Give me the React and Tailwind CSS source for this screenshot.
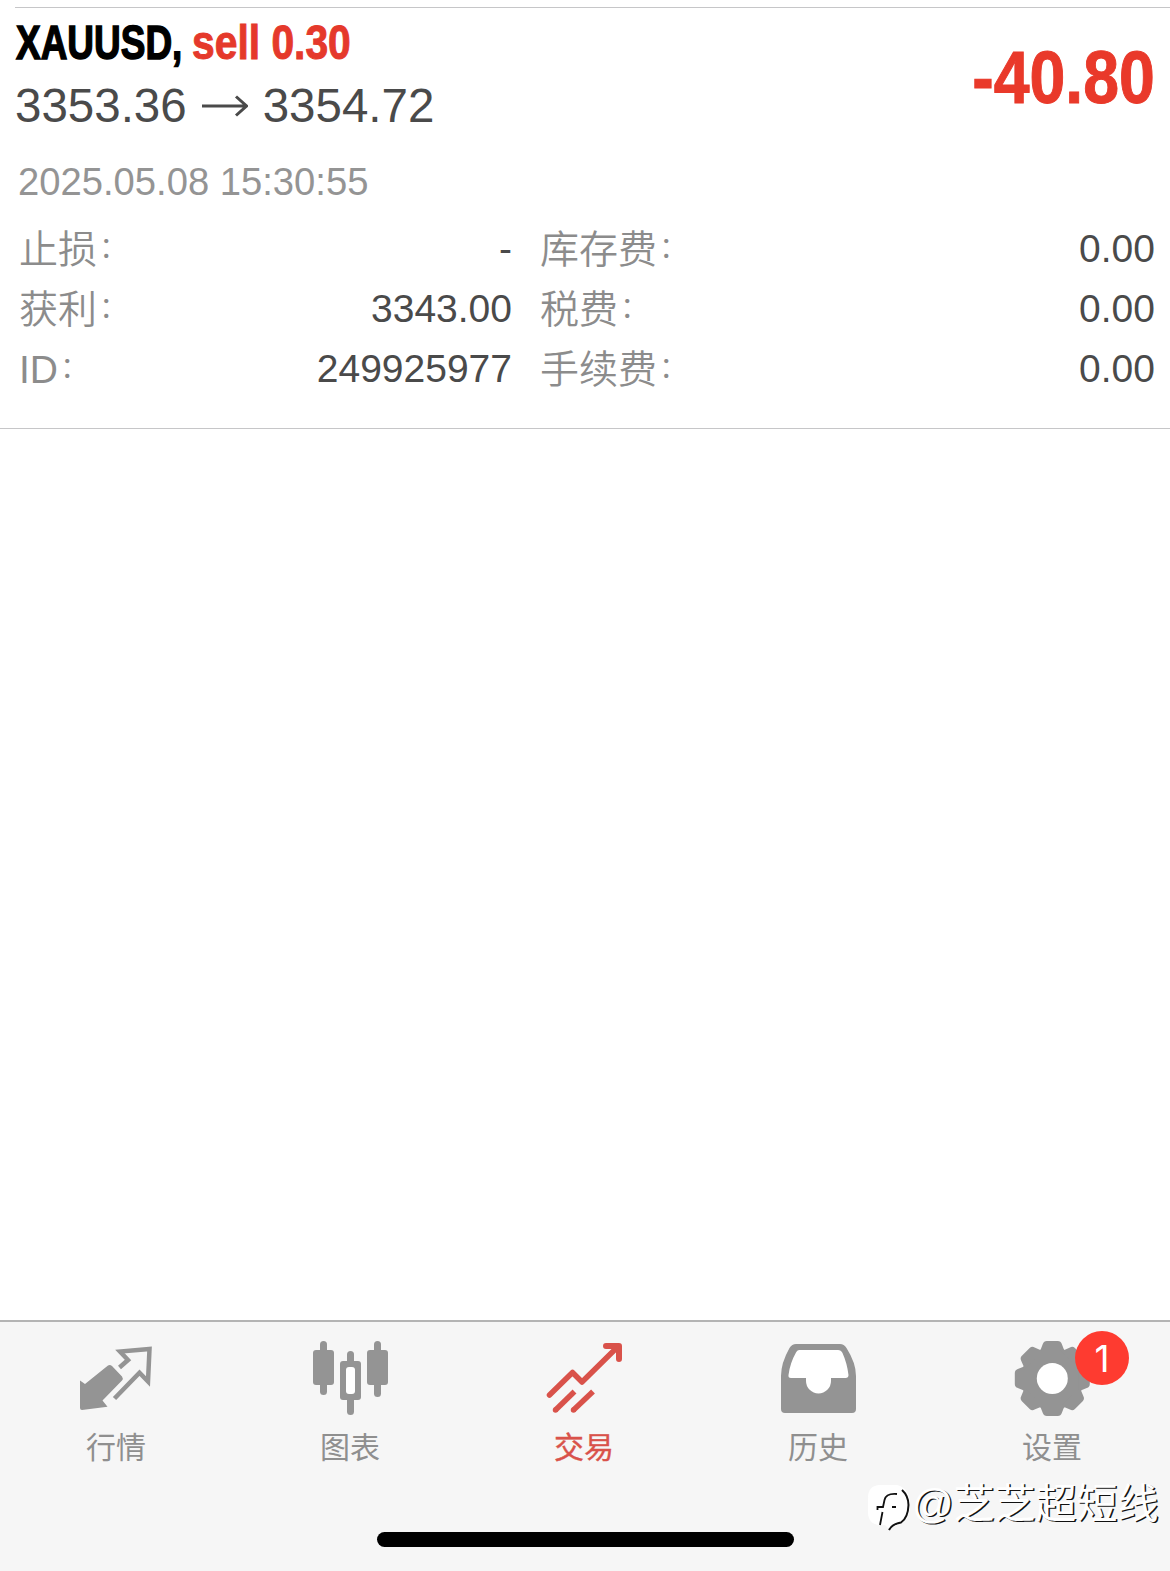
import React from 'react';

const GRAY = '#949494';

const QuotesIcon = () => (
  <svg width="110" height="84" viewBox="0 0 110 84" className="block">
    <path
      d="M18 44.5 L23 48 L46 29.5 Q48 28.300 50 30 L60 40.500 Q61.500 42.500 60 44.500 L40.500 64.500 L45.500 70.700 L20 74 Q18 74 18 72 Z"
      fill={GRAY}
    />
    <path
      d="M57.500 31.500 L66 24 L58 15.500 L87.500 13 L86 45.500 L77.500 36.700 L52.500 62.500"
      fill="none"
      stroke={GRAY}
      strokeWidth="4.5"
      strokeLinejoin="miter"
    />
  </svg>
);

const ChartIcon = () => (
  <svg width="110" height="84" viewBox="0 0 110 84" className="block">
    <g fill={GRAY}>
      <rect x="24" y="5" width="7" height="54" rx="3.5" />
      <rect x="17" y="14" width="21" height="35" rx="3" />
      <rect x="78" y="5" width="7" height="56" rx="3.5" />
      <rect x="71" y="14" width="21" height="35" rx="3" />
      <rect x="51" y="15" width="7" height="64" rx="3.5" />
      <rect x="44" y="25" width="21" height="39" rx="3" />
    </g>
    <rect x="50" y="31" width="9" height="27" rx="3" fill="#ffffff" />
  </svg>
);

const TradeIcon = () => (
  <svg width="110" height="84" viewBox="0 0 110 84" className="block">
    <g fill="none" stroke="#d9524a" strokeWidth="5.5">
      <path d="M19.500 59 L42.500 36.500 L52 46 L88 10.500" strokeLinecap="round" strokeLinejoin="round" />
      <path d="M76 10 H89 V23" strokeWidth="6" strokeLinecap="round" strokeLinejoin="round" />
      <path d="M25.500 74 L44.500 55.500" />
      <path d="M43.500 74 L63 55.500" />
    </g>
    <circle cx="25.500" cy="74" r="2.750" fill="#d9524a" />
    <circle cx="43.500" cy="74" r="2.750" fill="#d9524a" />
  </svg>
);

const HistoryIcon = () => (
  <svg width="110" height="84" viewBox="0 0 110 84" className="block">
    <g transform="translate(1 0)">
      <path
        d="M31 8 H75 Q79 8 81.500 12 Q91 27 91 40 V73 Q91 77 87 77 H20 Q16 77 16 73 V40 Q16 27 24.500 12 Q27 8 31 8 Z"
        fill={GRAY}
      />
      <path
        d="M34 14 H73 Q76 14 77.500 17 Q82 27 83.500 39 Q83.500 42 80.500 42 H66 V45 A12.500 12.500 0 0 1 41 45 V42 H26 Q23 42 23.500 39 Q25 27 31 16.500 Q32 14 34 14 Z"
        fill="#ffffff"
      />
    </g>
  </svg>
);

const SettingsIcon = () => (
  <svg width="110" height="84" viewBox="0 0 110 84" className="block">
    <g transform="translate(54.3 42.5)" fill={GRAY}>
      <circle r="30" />
      {[0, 45, 90, 135, 180, 225, 270, 315].map((angle) => (
        <path
          key={angle}
          transform={`rotate(${angle})`}
          d="M-14 -26 Q-11 -29 -9.500 -34.500 Q-8.500 -37.500 -5.500 -37.500 H5.500 Q8.500 -37.500 9.500 -34.500 Q11 -29 14 -26 Z"
        />
      ))}
      <circle r="15.5" fill="#ffffff" />
    </g>
  </svg>
);

const tabs = [
  { label: '行情', icon: QuotesIcon },
  { label: '图表', icon: ChartIcon },
  { label: '交易', icon: TradeIcon, active: true },
  { label: '历史', icon: HistoryIcon },
  { label: '设置', icon: SettingsIcon, badge: 1 },
];

const details = [
  ['止损', '-', '库存费', '0.00'],
  ['获利', '3343.00', '税费', '0.00'],
  ['ID', '249925977', '手续费', '0.00'],
];

const Label = ({ children }) => (
  <span className="flex pt-px font-[350] text-[#8c8c8c]">
    {children}
    <span className="-mt-[2px] ml-[2px] text-[29px]">：</span>
  </span>
);

const TabItem = ({ label, icon: Icon, active, badge }) => (
  <div className="relative flex w-[234px] flex-col items-center">
    <Icon />
    <span className={`mr-[2px] mt-[6px] text-[30px] leading-[44px] ${active ? 'text-[#d9524a] [-webkit-text-stroke:0.4px_#d9524a]' : 'text-[#8f8f8f]'}`}>
      {label}
    </span>
    {badge && (
      <span className="absolute left-[139px] top-[-5px] flex h-[54px] w-[54px] items-center justify-center rounded-full bg-[#fe3b30] font-['Inter',sans-serif] text-[37px] leading-none text-white">
        {badge}
      </span>
    )}
  </div>
);

export default function App() {
  return (
    <div className="flex h-[1571px] w-[1170px] flex-col overflow-hidden bg-white font-['Liberation_Sans','Noto_Sans_CJK_SC',sans-serif]">
      {/* Open position */}
      <section className="h-[429px] border-b border-[#c6c6c8] pt-[7px]">
        <div className="ml-[15px] border-t border-[#c6c6c8]" />
        <div className="flex justify-between pl-[15px] pr-[15px]">
          <div>
            <p className="ml-px mt-[7px] flex whitespace-nowrap text-[48px] font-bold leading-[56px]">
              <span className="w-[176px] origin-left scale-x-[0.77] text-black [-webkit-text-stroke:1.5px_#000]">XAUUSD,</span>
              <span className="origin-left scale-x-[0.85] text-[#e5392b] [-webkit-text-stroke:1px_#e5392b]">sell 0.30</span>
            </p>
            <p className="mt-[3px] flex items-center whitespace-nowrap text-[47.5px] leading-[64px] text-[#4a4a4a]">
              3353.36
              <svg width="46" height="24" viewBox="0 0 46 24" className="mx-[15px]">
                <path d="M0 12 H44 M34 2.500 L44.500 12 L34 21.500" fill="none" stroke="#4a4a4a" strokeWidth="3" />
              </svg>
              3354.72
            </p>
            <p className="ml-[3px] mt-[18px] whitespace-nowrap text-[38.2px] leading-[52px] text-[#949494]">
              2025.05.08 15:30:55
            </p>
          </div>
          <p className="mt-[32px] origin-right scale-x-[0.87] whitespace-nowrap text-[74px] font-bold leading-[76px] text-[#e9392a] [-webkit-text-stroke:1px_#e9392a]">
            -40.80
          </p>
        </div>
        <div className="mt-[11px] flex flex-col pl-[19px] pr-[15px] text-[39px] leading-[60px]">
          {details.map(([label, value, feeLabel, fee]) => (
            <div key={label} className="flex h-[60px]">
              <div className="flex w-[493px] justify-between">
                <Label>{label}</Label>
                <span className="text-[#4a4a4a]">{value}</span>
              </div>
              <div className="ml-[28px] flex flex-1 justify-between">
                <Label>{feeLabel}</Label>
                <span className="text-[#4a4a4a]">{fee}</span>
              </div>
            </div>
          ))}
        </div>
      </section>

      <main className="flex-1" />

      {/* Tab bar */}
      <nav className="relative flex h-[251px] flex-col border-t-2 border-[#b4b4b4] bg-[#f6f6f6]">
        <div className="flex pt-[14px]">
          {tabs.map((tab) => (
            <TabItem key={tab.label} {...tab} />
          ))}
        </div>
        <div className="absolute bottom-[24px] left-[377px] h-[15px] w-[417px] rounded-full bg-black" />
        <div className="absolute left-[867px] top-[162px] flex items-start">
          <svg width="48" height="50" viewBox="0 0 48 50">
            <path d="M12 1 H30 Q43 4 43 21 Q43 35 35 39 L22 45 L18 41 H12 Q1 40 1 28 V14 Q1 2 12 1 Z" fill="#ffffff" />
            <path d="M35 6 Q41.500 12 41.500 21 Q41 34 34 38.500 Q25 40 22 46" fill="none" stroke="#111111" strokeWidth="2" />
            <path d="M30 10 Q19 9 17.500 16 L16 23 H10.500 V26 M15.500 28 L13 41 M25 23 H29" fill="none" stroke="#111111" strokeWidth="1.800" />
          </svg>
          <span className="-ml-[3px] -mt-[5px] whitespace-nowrap text-[41px] leading-[50px] text-white [text-shadow:1.5px_1px_0_#111]">@芝芝超短线</span>
        </div>
      </nav>
    </div>
  );
}
